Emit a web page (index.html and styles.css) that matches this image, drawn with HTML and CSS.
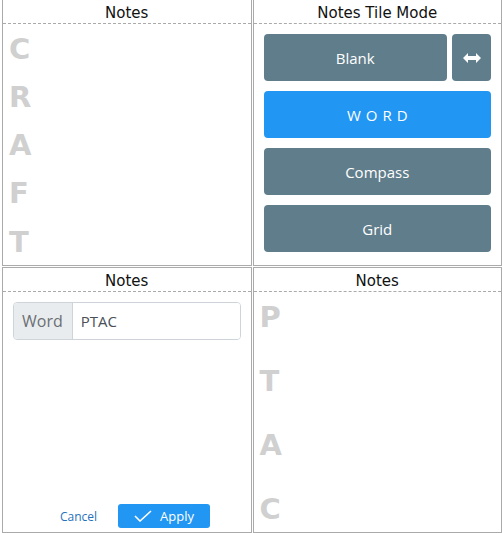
FILE: index.html
```html
<!DOCTYPE html>
<html lang="en">
<head>
  <meta charset="UTF-8">
  <title>Notes</title>
  <link rel="stylesheet" href="styles.css">
</head>
<body>

  <div class="board">

    <div class="panel">
      <div class="panel-title">Notes</div>
      <div class="letters letters-five">
        <span>C</span>
        <span>R</span>
        <span>A</span>
        <span>F</span>
        <span>T</span>
      </div>
    </div>

    <div class="panel">
      <div class="panel-title">Notes Tile Mode</div>
      <div class="modes">
        <div class="mode-row">
          <button class="mode-btn grow">Blank</button>
          <button class="mode-btn swap">
            <svg width="18" height="10" viewBox="0 0 18 10">
              <path d="M0 5 L5 0 L5 3 L13 3 L13 0 L18 5 L13 10 L13 7 L5 7 L5 10 Z" fill="#fff"/>
            </svg>
          </button>
        </div>
        <button class="mode-btn active">WORD</button>
        <button class="mode-btn">Compass</button>
        <button class="mode-btn">Grid</button>
      </div>
    </div>

    <div class="panel">
      <div class="panel-title">Notes</div>
      <div class="editor">
        <div class="input-group">
          <span class="addon">Word</span>
          <input type="text" class="word-input" value="PTAC">
        </div>
      </div>
      <div class="actions">
        <a class="cancel" href="#">Cancel</a>
        <button class="apply-btn">
          <svg width="18" height="12" viewBox="0 0 18 12">
            <polyline points="1,6 6,11 17,1" fill="none" stroke="#fff" stroke-width="1.6"/>
          </svg>
          Apply
        </button>
      </div>
    </div>

    <div class="panel">
      <div class="panel-title">Notes</div>
      <div class="letters">
        <span>P</span>
        <span>T</span>
        <span>A</span>
        <span>C</span>
      </div>
    </div>

  </div>

</body>
</html>
```

FILE: styles.css
```css
body {
  margin: 0;
  background: #fff;
  font-family: "Open Sans", Arial, sans-serif;
}

.board {
  display: grid;
  grid-template-columns: minmax(0, 1fr) minmax(0, 1fr);
  grid-template-rows: minmax(0, 1fr) minmax(0, 1fr);
  gap: 1px;
  height: 534px;
  margin-top: -1px;
  padding-left: 2px;
  padding-right: 1px;
}

.panel {
  display: flex;
  flex-direction: column;
  border: 1px solid #aaa;
  min-height: 0;
  min-width: 0;
}

.panel-title {
  height: 23px;
  line-height: 27px;
  overflow: hidden;
  text-align: center;
  font-family: "DejaVu Sans", Verdana, sans-serif;
  font-size: 15px;
  color: #111;
  border-bottom: 1px dashed #aaa;
}

.letters {
  flex: 1;
  display: flex;
  flex-direction: column;
  justify-content: space-between;
  padding-left: 6px;
}

.letters span {
  height: 48px;
  line-height: 50px;
  font-family: "DejaVu Sans", Verdana, sans-serif;
  font-weight: bold;
  font-size: 29px;
  color: #d0d0d0;
}

.modes {
  flex: 1;
  display: flex;
  flex-direction: column;
  gap: 10px;
  padding: 10px;
}

.mode-row {
  display: flex;
  gap: 5px;
}

.mode-btn {
  height: 47px;
  border: none;
  border-radius: 4px;
  background-color: #607d8b;
  color: #fff;
  font-family: "Open Sans", Arial, sans-serif;
  font-size: 15px;
}

.mode-btn.grow {
  flex: 1;
}

.mode-btn.swap {
  width: 39px;
  display: flex;
  justify-content: center;
  align-items: center;
}

.mode-btn.active {
  background-color: #2196f3;
  letter-spacing: 5px;
  text-indent: 5px;
}

.editor {
  flex: 1;
  padding: 10px;
}

.input-group {
  display: flex;
  height: 38px;
  border: 1px solid #ced4da;
  border-radius: 4px;
  box-sizing: border-box;
  overflow: hidden;
}

.addon {
  display: flex;
  align-items: center;
  padding: 0 9px 0 8px;
  background-color: #e9ecef;
  border-right: 1px solid #ced4da;
  color: #6b6f73;
  font-size: 16px;
}

.word-input {
  flex: 1;
  min-width: 0;
  border: none;
  padding: 0 8px;
  font-family: "Open Sans", Arial, sans-serif;
  font-size: 15px;
  color: #495057;
  outline: none;
}

.actions {
  display: flex;
  align-items: center;
  padding: 0 0 4px 45px;
}

.cancel {
  padding: 0 12px;
  font-size: 12px;
  color: #1f72bd;
  text-decoration: none;
}

.apply-btn {
  display: flex;
  align-items: center;
  gap: 8px;
  width: 92px;
  height: 24px;
  margin-left: 9px;
  padding: 0 0 0 16px;
  border: none;
  border-radius: 3px;
  background-color: #2196f3;
  color: #fff;
  font-family: "Open Sans", Arial, sans-serif;
  font-size: 13px;
}
```
